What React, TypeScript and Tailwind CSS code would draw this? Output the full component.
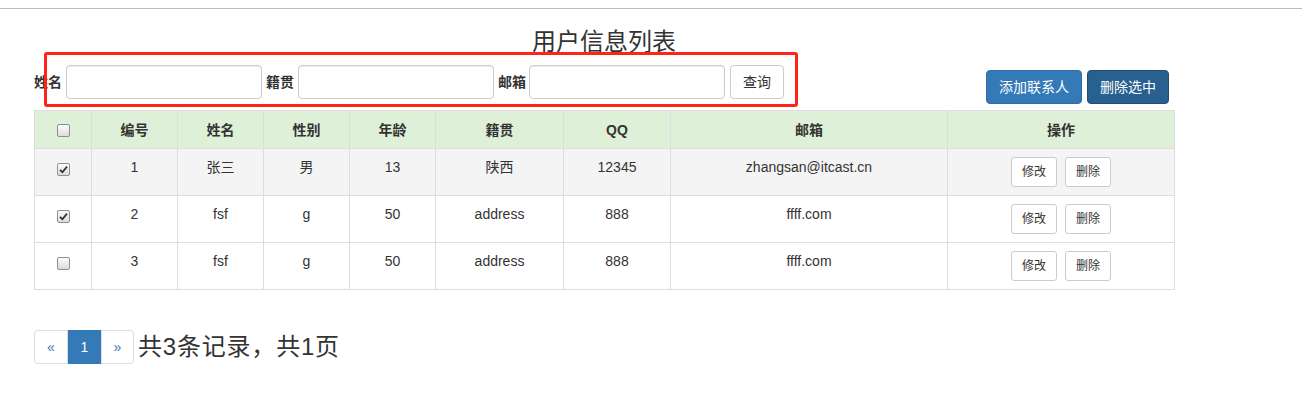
import React from "react";

const font = { fontFamily: '"Liberation Sans", Arial, "Noto Sans CJK SC", sans-serif' };

function Check({ checked }: { checked?: boolean }) {
  return (
    <span className="inline-flex h-[13px] w-[13px] items-center justify-center rounded-[2px] border border-[#8f8f8f] bg-gradient-to-b from-[#fcfcfc] to-[#dcdcdc] align-middle">
      {checked && (
        <svg width="9" height="9" viewBox="0 0 9 9">
          <path d="M1 4.8 L3.4 7.2 L8 1.6" fill="none" stroke="#333" strokeWidth="1.8" />
        </svg>
      )}
    </span>
  );
}

const rows = [
  { id: 1, name: "张三", sex: "男", age: 13, addr: "陕西", qq: "12345", email: "zhangsan@itcast.cn", checked: true },
  { id: 2, name: "fsf", sex: "g", age: 50, addr: "address", qq: "888", email: "ffff.com", checked: true },
  { id: 3, name: "fsf", sex: "g", age: 50, addr: "address", qq: "888", email: "ffff.com", checked: false },
];

export default function App() {
  return (
    <div className="relative h-[414px] w-[1302px] bg-white text-[14px] text-[#333]" style={font}>
      <div className="h-[8px]" />
      <div className="h-px bg-[#bdbdbd]" />
      <div className="ml-[34px] w-[1140px]">
        <div className="mt-[20px] text-center text-[24px] leading-[26px]">用户信息列表</div>
        <div className="mt-[10px] flex items-start justify-between">
          <div className="flex items-center">
            <label className="mr-[4px] font-bold">姓名</label>
            <input className="h-[34px] w-[196px] rounded-[4px] border border-[#ccc] shadow-[inset_0_1px_1px_rgba(0,0,0,0.075)] outline-none" />
            <label className="ml-[4px] mr-[4px] font-bold">籍贯</label>
            <input className="h-[34px] w-[196px] rounded-[4px] border border-[#ccc] shadow-[inset_0_1px_1px_rgba(0,0,0,0.075)] outline-none" />
            <label className="ml-[4px] mr-[3px] font-bold">邮箱</label>
            <input className="h-[34px] w-[196px] rounded-[4px] border border-[#ccc] shadow-[inset_0_1px_1px_rgba(0,0,0,0.075)] outline-none" />
            <button className="ml-[5px] h-[34px] w-[54px] rounded-[4px] border border-[#ccc] bg-white text-[14px] text-[#333]">查询</button>
          </div>
          <div className="mr-[5px] mt-[5px] flex gap-[5px]">
            <button className="h-[34px] w-[96px] rounded-[4px] border border-[#2e6da4] bg-[#337ab7] text-[14px] text-white">添加联系人</button>
            <button className="h-[34px] w-[82px] rounded-[4px] border border-[#204d74] bg-[#286090] text-[14px] text-white">删除选中</button>
          </div>
        </div>
        <table className="mt-[6px] w-[1140px] table-fixed border-collapse border border-[#ddd] text-center">
          <colgroup>
            <col className="w-[57px]" />
            <col className="w-[86px]" />
            <col className="w-[86px]" />
            <col className="w-[86px]" />
            <col className="w-[86px]" />
            <col className="w-[128px]" />
            <col className="w-[107px]" />
            <col className="w-[277px]" />
            <col className="w-[227px]" />
          </colgroup>
          <thead>
            <tr className="bg-[#dff0d8]">
              <th className="h-[38px] border border-[#ddd] p-[8px] leading-[20px]"><Check /></th>
              {["编号", "姓名", "性别", "年龄", "籍贯", "QQ", "邮箱", "操作"].map((h) => (
                <th key={h} className="border border-[#ddd] p-[8px] font-bold leading-[20px]">{h}</th>
              ))}
            </tr>
          </thead>
          <tbody>
            {rows.map((r, i) => (
              <tr key={r.id} className={i === 0 ? "bg-[#f4f4f4]" : "bg-white"}>
                <td className="border border-[#ddd] px-[8px] pb-[8px] pt-[13px] align-top leading-[13px]"><Check checked={r.checked} /></td>
                <td className="border border-[#ddd] p-[8px] align-top leading-[20px]">{r.id}</td>
                <td className="border border-[#ddd] p-[8px] align-top leading-[20px]">{r.name}</td>
                <td className="border border-[#ddd] p-[8px] align-top leading-[20px]">{r.sex}</td>
                <td className="border border-[#ddd] p-[8px] align-top leading-[20px]">{r.age}</td>
                <td className="border border-[#ddd] p-[8px] align-top leading-[20px]">{r.addr}</td>
                <td className="border border-[#ddd] p-[8px] align-top leading-[20px]">{r.qq}</td>
                <td className="border border-[#ddd] p-[8px] align-top leading-[20px]">{r.email}</td>
                <td className="border border-[#ddd] p-[8px] align-top leading-[20px]">
                  <div className="flex justify-center gap-[8px]">
                    <button className="h-[30px] w-[46px] rounded-[3px] border border-[#ccc] bg-white text-[12px] text-[#333]">修改</button>
                    <button className="h-[30px] w-[46px] rounded-[3px] border border-[#ccc] bg-white text-[12px] text-[#333]">删除</button>
                  </div>
                </td>
              </tr>
            ))}
          </tbody>
        </table>
        <div className="mt-[40px] flex items-center">
          <div className="flex h-[34px] text-[14px]">
            <span className="flex w-[34px] items-center justify-center rounded-l-[4px] border border-[#ddd] text-[#337ab7]">«</span>
            <span className="flex w-[33px] items-center justify-center border border-[#337ab7] bg-[#337ab7] text-white">1</span>
            <span className="flex w-[33px] items-center justify-center rounded-r-[4px] border border-[#ddd] text-[#337ab7]">»</span>
          </div>
          <span className="ml-[4px] text-[24px] leading-[34px] tracking-[0.8px]">共3条记录，共1页</span>
        </div>
      </div>
      <div className="absolute left-[44px] top-[52px] h-[55px] w-[754px] rounded-[3px] border-[3px] border-[#ff2318]" />
    </div>
  );
}
